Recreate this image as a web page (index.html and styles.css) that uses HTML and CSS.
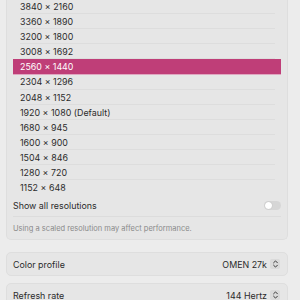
FILE: index.html
```html
<!DOCTYPE html>
<html>
	<head>
		<meta charset="UTF-8">
		<title>Displays</title>
		<link rel="stylesheet" href="styles.css">
	</head>
	<body>
		<div class="ventana">
			<div class="grupo grupoResoluciones">
				<ul class="listaResoluciones">
					<li>3840 × 2160</li>
					<li>3360 × 1890</li>
					<li>3200 × 1800</li>
					<li>3008 × 1692</li>
					<li class="seleccionado">2560 × 1440</li>
					<li>2304 × 1296</li>
					<li>2048 × 1152</li>
					<li>1920 × 1080 (Default)</li>
					<li>1680 × 945</li>
					<li>1600 × 900</li>
					<li>1504 × 846</li>
					<li>1280 × 720</li>
					<li>1152 × 648</li>
				</ul>
				<div class="fila filaSeparada">
					<span>Show all resolutions</span>
					<span class="interruptor"><span class="perilla"></span></span>
				</div>
				<div class="nota">Using a scaled resolution may affect performance.</div>
			</div>

			<div class="grupo">
				<div class="fila">
					<span>Color profile</span>
					<span class="selector">OMEN 27k
						<span class="flechas">
							<svg width="9" height="10" viewBox="0 0 9 10"><path d="M2.6 3.8 L4.5 1.9 L6.4 3.8 M2.6 6.2 L4.5 8.1 L6.4 6.2" fill="none" stroke="#3a3a3a" stroke-width="1" stroke-linecap="round" stroke-linejoin="round"/></svg>
						</span>
					</span>
				</div>
			</div>

			<div class="grupo">
				<div class="fila">
					<span>Refresh rate</span>
					<span class="selector">144 Hertz
						<span class="flechas">
							<svg width="9" height="10" viewBox="0 0 9 10"><path d="M2.6 3.8 L4.5 1.9 L6.4 3.8 M2.6 6.2 L4.5 8.1 L6.4 6.2" fill="none" stroke="#3a3a3a" stroke-width="1" stroke-linecap="round" stroke-linejoin="round"/></svg>
						</span>
					</span>
				</div>
			</div>
		</div>
	</body>
</html>
```

FILE: styles.css
```css
body {
	margin: 0;
	background: #ececec;
	font-family: Inter, "Noto Sans", sans-serif;
	font-size: 8.9px;
	color: #2b2b2b;
	overflow: hidden;
}
div.ventana {
	padding: 0 12px 0 6px;
	display: flex;
	flex-direction: column;
	gap: 7px;
}
div.grupo {
	background: #e6e6e6;
	border: 1px solid #dedede;
	border-radius: 5px;
	padding: 0 6px;
}
div.grupoResoluciones {
	margin-top: -1px;
	border-top: none;
	border-radius: 0 0 5px 5px;
	margin-bottom: 5px;
}
ul.listaResoluciones {
	list-style: none;
	margin: 0;
	padding: 0;
}
ul.listaResoluciones li {
	height: 15.1px;
	line-height: 15px;
	padding-left: 7px;
	position: relative;
}
ul.listaResoluciones li:after {
	content: "";
	position: absolute;
	left: 7px;
	right: 6px;
	bottom: 0;
	border-bottom: 1px solid #dddddd;
}
ul.listaResoluciones li.seleccionado {
	background: #bf3e78;
	color: #ffffff;
	box-shadow: 0 1px 0 #dfa7c0;
}
ul.listaResoluciones li.seleccionado:after,
ul.listaResoluciones li:last-child:after {
	border-bottom: none;
}
div.fila {
	height: 22px;
	display: flex;
	align-items: center;
	justify-content: space-between;
}
div.filaSeparada {
	height: 21px;
	border-bottom: 1px solid #dcdcdc;
}
span.interruptor {
	width: 17px;
	height: 9px;
	border-radius: 5px;
	background: #d6d6d6;
	display: flex;
	align-items: center;
	padding: 0 1px;
	box-sizing: border-box;
}
span.perilla {
	width: 7px;
	height: 7px;
	border-radius: 50%;
	background: #ffffff;
	box-shadow: 0 0 1px rgba(0, 0, 0, 0.25);
}
div.nota {
	font-size: 7.5px;
	color: #8a8a8a;
	padding: 7px 0 6px;
}
span.selector {
	display: flex;
	align-items: center;
	gap: 3px;
}
span.flechas {
	display: flex;
	width: 10px;
	height: 10px;
	border-radius: 2px;
	background: #dadada;
	align-items: center;
	justify-content: center;
	margin-right: 1px;
}
```
